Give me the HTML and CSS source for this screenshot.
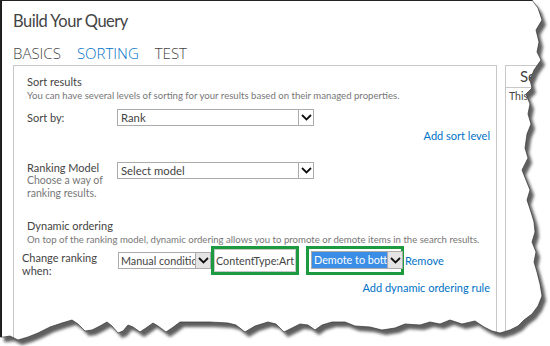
FILE: index.html
```html
<!DOCTYPE html>
<html lang="en">
<head>
    <meta charset="UTF-8">
    <title>Build Your Query</title>
    <link rel="stylesheet" href="styles.css">
</head>
<body>
    <div class="page">
        <h1 class="title">Build Your Query</h1>
        <nav class="tabs">
            <span class="tab">BASICS</span>
            <span class="tab active">SORTING</span>
            <span class="tab">TEST</span>
        </nav>

        <div class="workspace">
            <section class="panel">
                <div class="group">
                    <div class="group-title">Sort results</div>
                    <div class="group-desc">You can have several levels of sorting for your results based on their managed properties.</div>
                </div>

                <div class="row sort-row">
                    <div class="label">Sort by:</div>
                    <div class="select wide">
                        <span class="value">Rank</span>
                        <span class="arrow"><svg width="11" height="7" viewBox="0 0 11 7"><polyline points="1,1 5.5,5.5 10,1" fill="none" stroke="#111" stroke-width="1.8"/></svg></span>
                    </div>
                </div>
                <div class="action"><a class="link">Add sort level</a></div>

                <div class="row ranking-row">
                    <div class="label">
                        Ranking Model
                        <div class="hint">Choose a way of<br>ranking results.</div>
                    </div>
                    <div class="select wide">
                        <span class="value">Select model</span>
                        <span class="arrow"><svg width="11" height="7" viewBox="0 0 11 7"><polyline points="1,1 5.5,5.5 10,1" fill="none" stroke="#111" stroke-width="1.8"/></svg></span>
                    </div>
                </div>

                <div class="group dynamic">
                    <div class="group-title">Dynamic ordering</div>
                    <div class="group-desc">On top of the ranking model, dynamic ordering allows you to promote or demote items in the search results.</div>
                </div>

                <div class="row rule-row">
                    <div class="label">Change ranking when:</div>
                    <div class="select narrow">
                        <span class="value">Manual conditio</span>
                        <span class="arrow shaded"><svg width="11" height="7" viewBox="0 0 11 7"><polyline points="1,1 5.5,5.5 10,1" fill="none" stroke="#111" stroke-width="1.8"/></svg></span>
                    </div>
                    <div class="highlight">
                        <div class="textbox">ContentType:Art</div>
                    </div>
                    <div class="highlight padded">
                        <div class="select picked">
                            <span class="value">Demote to botto</span>
                            <span class="arrow shaded"><svg width="11" height="7" viewBox="0 0 11 7"><polyline points="1,1 5.5,5.5 10,1" fill="none" stroke="#111" stroke-width="1.8"/></svg></span>
                        </div>
                    </div>
                    <a class="link">Remove</a>
                </div>
                <div class="action rule-action"><a class="link">Add dynamic ordering rule</a></div>
            </section>

            <aside class="side">
                <div class="side-head">Settings</div>
                <div class="side-body">This query</div>
            </aside>
        </div>
    </div>

    <!-- torn paper edge laid over the right and bottom of the screenshot -->
    <svg class="tear" width="550" height="346" viewBox="0 0 550 346">
        <defs>
            <path id="sheet" d="M0,0 L532,0 L538,8 L542,20 L536,30 L539,42 L537,52 L541,60 L534,70 L530,80 L532,88 L526,94 L530,104 L528,114 L531,124 L527,134 L525,148 L528,158 L522,170 L526,180 L530,190 L527,200 L531,212 L534,222 L535,232 L532,242 L536,252 L534,262 L537,272 L540,284 L542,296 L538,306 L532,314 L524,320 L518,326 L510,330 L500,333 L492,331 L484,327 L475,321 L462,324 L450,320 L440,324 L430,322 L420,325 L405,324 L395,328 L382,330 L370,327 L355,326 L345,322 L332,322 L322,325 L315,330 L308,325 L300,324 L290,329 L284,332 L276,324 L268,322 L255,326 L245,332 L236,325 L228,323 L210,322 L195,322 L180,322 L172,328 L166,332 L158,326 L153,323 L146,328 L140,332 L133,327 L128,325 L123,331 L118,333 L112,326 L107,322 L100,326 L92,330 L85,331 L78,324 L72,320 L62,323 L50,327 L38,333 L28,337 L18,340 L10,336 L4,337 L0,337 Z"/>
            <clipPath id="outside">
                <path clip-rule="evenodd" d="M0,0 H550 V346 H0 Z M0,0 L532,0 L538,8 L542,20 L536,30 L539,42 L537,52 L541,60 L534,70 L530,80 L532,88 L526,94 L530,104 L528,114 L531,124 L527,134 L525,148 L528,158 L522,170 L526,180 L530,190 L527,200 L531,212 L534,222 L535,232 L532,242 L536,252 L534,262 L537,272 L540,284 L542,296 L538,306 L532,314 L524,320 L518,326 L510,330 L500,333 L492,331 L484,327 L475,321 L462,324 L450,320 L440,324 L430,322 L420,325 L405,324 L395,328 L382,330 L370,327 L355,326 L345,322 L332,322 L322,325 L315,330 L308,325 L300,324 L290,329 L284,332 L276,324 L268,322 L255,326 L245,332 L236,325 L228,323 L210,322 L195,322 L180,322 L172,328 L166,332 L158,326 L153,323 L146,328 L140,332 L133,327 L128,325 L123,331 L118,333 L112,326 L107,322 L100,326 L92,330 L85,331 L78,324 L72,320 L62,323 L50,327 L38,333 L28,337 L18,340 L10,336 L4,337 L0,337 Z"/>
            </clipPath>
            <filter id="soft" x="-5%" y="-5%" width="110%" height="110%">
                <feGaussianBlur stdDeviation="1.8"/>
            </filter>
        </defs>
        <path fill="#fff" fill-rule="evenodd" d="M0,0 H550 V346 H0 Z M0,0 L532,0 L538,8 L542,20 L536,30 L539,42 L537,52 L541,60 L534,70 L530,80 L532,88 L526,94 L530,104 L528,114 L531,124 L527,134 L525,148 L528,158 L522,170 L526,180 L530,190 L527,200 L531,212 L534,222 L535,232 L532,242 L536,252 L534,262 L537,272 L540,284 L542,296 L538,306 L532,314 L524,320 L518,326 L510,330 L500,333 L492,331 L484,327 L475,321 L462,324 L450,320 L440,324 L430,322 L420,325 L405,324 L395,328 L382,330 L370,327 L355,326 L345,322 L332,322 L322,325 L315,330 L308,325 L300,324 L290,329 L284,332 L276,324 L268,322 L255,326 L245,332 L236,325 L228,323 L210,322 L195,322 L180,322 L172,328 L166,332 L158,326 L153,323 L146,328 L140,332 L133,327 L128,325 L123,331 L118,333 L112,326 L107,322 L100,326 L92,330 L85,331 L78,324 L72,320 L62,323 L50,327 L38,333 L28,337 L18,340 L10,336 L4,337 L0,337 Z"/>
        <g clip-path="url(#outside)">
            <use href="#sheet" transform="translate(4,5)" fill="#5e5e5e" filter="url(#soft)"/>
        </g>
        <use href="#sheet" fill="none" stroke="#333" stroke-width="0.7"/>
    </svg>
</body>
</html>
```

FILE: styles.css
```css
body {
    margin: 0;
    padding: 0;
    background: #fff;
    font-family: Lato, "Open Sans", sans-serif;
    color: #444;
    width: 550px;
    height: 346px;
    overflow: hidden;
    position: relative;
}
.page {
    height: 346px;
    box-sizing: border-box;
    border-top: 1px solid #1a1a1a;
    border-left: 2px solid #1a1a1a;
    padding: 10px 0 0 11px;
}
.title {
    margin: 0;
    font-family: Lato, sans-serif;
    font-size: 16.5px;
    font-weight: 400;
    letter-spacing: -0.5px;
    line-height: 21px;
    color: #444;
}
.tabs {
    display: flex;
    gap: 16px;
    margin-top: 12px;
    font-family: "Open Sans", sans-serif;
    font-size: 15px;
    line-height: 19px;
    font-weight: 300;
}
.tab {
    color: #444;
}
.tab.active {
    color: #0072c6;
}
.workspace {
    display: flex;
    gap: 8px;
    margin-top: 2px;
}
.panel {
    width: 484px;
    height: 300px;
    flex-shrink: 0;
    box-sizing: border-box;
    border: 1px solid #c8c8c8;
    padding: 9px 6px 0 13px;
    font-size: 11px;
}
.group-title {
    line-height: 14px;
    color: #444;
}
.group-desc {
    line-height: 13px;
    font-size: 9.6px;
    color: #777;
    white-space: nowrap;
}
.row {
    display: flex;
    align-items: flex-start;
}
.label {
    width: 90px;
    flex-shrink: 0;
    line-height: 13px;
    color: #444;
}
.hint {
    color: #777;
    font-size: 10.5px;
}
.sort-row {
    margin-top: 7px;
}
.sort-row .label {
    padding-top: 2px;
}
.select {
    display: flex;
    height: 17px;
    box-sizing: border-box;
    border: 1px solid #ababab;
    background: #fff;
}
.select .value {
    flex: 1;
    padding-left: 3px;
    line-height: 15px;
    font-size: 11.3px;
    white-space: nowrap;
    overflow: hidden;
}
.arrow {
    width: 14px;
    border-left: 1px solid #ababab;
    display: flex;
    align-items: center;
    justify-content: center;
}
.arrow.shaded {
    background: #e4e4e4;
}
.select.wide {
    width: 197px;
}
.action {
    text-align: right;
    line-height: 14px;
    margin-top: 3px;
}
.link {
    color: #0072c6;
}
.ranking-row {
    margin-top: 18px;
}
.ranking-row .select {
    margin-top: 1px;
}
.dynamic {
    margin-top: 19px;
}
.rule-row {
    margin-top: -3px;
    margin-left: -5px;
    align-items: center;
}
.rule-row .label {
    width: 96px;
    padding-top: 8px;
    align-self: flex-start;
}
.select.narrow {
    width: 93px;
}
.select.narrow .value {
    padding-left: 2px;
    font-size: 10.8px;
}
.highlight {
    border: 3px solid #1b9a40;
    box-sizing: border-box;
    height: 29px;
    width: 88px;
    display: flex;
    align-items: center;
}
.highlight.padded {
    margin-left: 7px;
    padding: 0 2px;
    width: 98px;
}
.textbox {
    width: 82px;
    height: 23px;
    box-sizing: border-box;
    border: 1px solid #c8c8c8;
    padding-left: 1px;
    line-height: 21px;
    font-size: 10.8px;
    white-space: nowrap;
    overflow: hidden;
}
.select.picked {
    width: 92px;
    height: 18px;
}
.select.picked .value {
    background: #3a8ee6;
    color: #fff;
    padding-left: 2px;
    font-size: 10.8px;
}
.rule-row .link {
    margin-left: 1px;
}
.rule-action {
    margin-top: 4px;
}
.side {
    width: 60px;
    height: 300px;
    border: 1px solid #c8c8c8;
    box-sizing: border-box;
}
.side-head {
    height: 21px;
    border-bottom: 1px solid #c8c8c8;
    font-size: 15px;
    line-height: 21px;
    padding-left: 14px;
}
.side-body {
    font-size: 10.5px;
    padding: 2px 0 0 3px;
    white-space: nowrap;
}
.tear {
    position: absolute;
    left: 0;
    top: 0;
}
```
